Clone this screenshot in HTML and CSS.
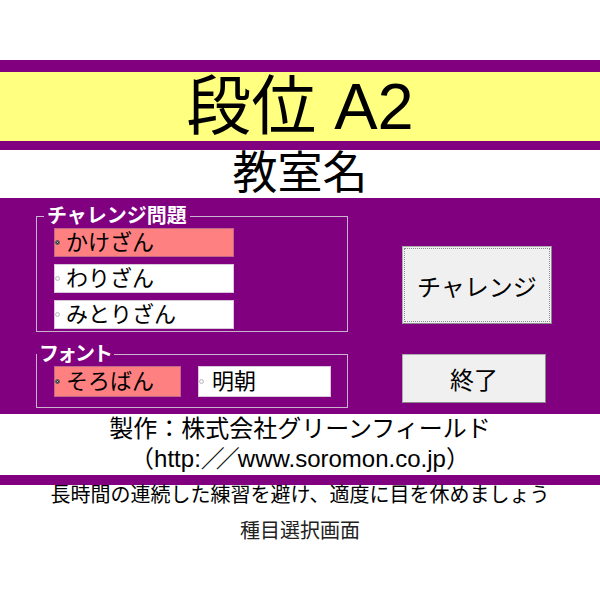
FILE: index.html
```html
<!DOCTYPE html>
<html lang="ja">
<head>
<meta charset="utf-8">
<title>種目選択画面</title>
<link rel="stylesheet" href="styles.css">
</head>
<body>
<div class="page">
  <div class="top-gap"></div>
  <header class="title-band">
    <h1 class="title">段位 A2</h1>
  </header>
  <div class="school">教室名</div>
  <main class="panel">
    <div class="left">
      <fieldset class="group group-problem">
        <legend class="legend legend-problem">チャレンジ問題</legend>
        <div class="options">
          <div class="opt opt-on opt-wide"><span class="radio radio-on"></span><span class="opt-text">かけざん</span></div>
          <div class="opt opt-wide"><span class="radio"></span><span class="opt-text">わりざん</span></div>
          <div class="opt opt-wide"><span class="radio"></span><span class="opt-text">みとりざん</span></div>
        </div>
      </fieldset>
      <fieldset class="group group-font">
        <legend class="legend legend-font">フォント</legend>
        <div class="font-options">
          <div class="opt opt-on opt-font opt-soroban"><span class="radio radio-on"></span><span class="opt-text">そろばん</span></div>
          <div class="opt opt-font opt-mincho"><span class="radio"></span><span class="opt-text">明朝</span></div>
        </div>
      </fieldset>
    </div>
    <div class="right">
      <button class="btn btn-challenge" type="button">チャレンジ</button>
      <button class="btn btn-exit" type="button">終了</button>
    </div>
  </main>
  <div class="credit">
    <div class="credit-line">製作：株式会社グリーンフィールド</div>
    <div class="credit-line">（http:<span class="slashes">／／</span>www.soromon.co.jp）</div>
  </div>
  <div class="bar"></div>
  <p class="note">長時間の連続した練習を避け、適度に目を休めましょう</p>
  <p class="screen-name">種目選択画面</p>
</div>
</body>
</html>
```

FILE: styles.css
```css
* { box-sizing: border-box; }

html, body {
  margin: 0;
  padding: 0;
  background: #ffffff;
}

body {
  font-family: "Liberation Sans", "Noto Sans CJK JP", sans-serif;
  color: #000000;
}

.page {
  width: 600px;
  height: 600px;
  overflow: hidden;
}

.top-gap {
  height: 60px;
}

.title-band {
  background: #ffff80;
  border-top: 12px solid #800080;
  border-bottom: 9px solid #800080;
  height: 90px;
}

.title {
  margin: 0;
  font-weight: normal;
  font-size: 65px;
  line-height: 69px;
  text-align: center;
}

.school {
  height: 48px;
  font-size: 45px;
  line-height: 48px;
  text-align: center;
}

.panel {
  background: #800080;
  height: 216px;
  display: flex;
}

.left {
  padding-left: 36px;
  width: 348px;
}

.group {
  margin: 0;
  padding: 2px 0 2px 0;
  min-width: 0;
  width: 312px;
  border: 1px solid #c8b4cc;
}

.group-problem {
  margin-top: 8px;
}

.group-font {
  margin-top: 12px;
  padding-bottom: 10px;
}

.legend {
  color: #ffffff;
  font-weight: bold;
  font-size: 20px;
  line-height: 20px;
  padding: 0 3px;
}

.legend-problem {
  margin-left: 7px;
}

.legend-font {
  margin-left: 0;
  padding-left: 2px;
  letter-spacing: -2px;
}

.options {
  display: flex;
  flex-direction: column;
  gap: 7px;
  margin-left: 17px;
}

.font-options {
  display: flex;
  gap: 17px;
  margin-left: 17px;
}

.opt {
  display: flex;
  align-items: center;
  background: #ffffff;
  border: 1px solid #d9c8dc;
  height: 29px;
  font-size: 22px;
}

.opt-on {
  background: #ff8080;
  border-color: #c06a8a;
}

.opt-wide {
  width: 180px;
}

.opt-font {
  height: 31px;
}

.opt-soroban {
  width: 127px;
}

.opt-mincho {
  width: 133px;
}

.radio {
  width: 5px;
  height: 5px;
  border-radius: 50%;
  border: 1px solid #bbbbbb;
  background: #f4f4f4;
  margin-left: 0;
  margin-right: 6px;
  flex: none;
}

.radio-on {
  border-color: #444444;
  background: #ffffff;
  box-shadow: inset 0 0 0 1px #222222;
}

.opt-mincho .radio {
  margin-right: 8px;
}

.opt-text {
  line-height: 1;
}

.right {
  display: flex;
  flex-direction: column;
  align-items: flex-start;
  margin-left: 54px;
  padding-top: 48px;
}

.btn {
  font-family: "Liberation Sans", "Noto Sans CJK JP", sans-serif;
  font-size: 24px;
  color: #000000;
  background: #f0f0f0;
  border: 1px solid #adadad;
  border-right-color: #8a8a8a;
  border-bottom-color: #8a8a8a;
  padding: 0;
  margin: 0;
}

.btn-challenge {
  width: 150px;
  height: 78px;
  outline: 1px dotted #8c8c8c;
  outline-offset: -3px;
}

.btn-exit {
  width: 144px;
  height: 49px;
  margin-top: 30px;
}

.credit {
  height: 61px;
  text-align: center;
  font-size: 24px;
  line-height: 30px;
}

.slashes {
  letter-spacing: -9px;
  padding-right: 7px;
}

.bar {
  height: 10px;
  background: #800080;
}

.note {
  margin: 0;
  text-align: center;
  font-size: 20px;
  line-height: 20px;
}

.screen-name {
  margin: 16px 0 0 0;
  text-align: center;
  font-size: 20px;
  line-height: 20px;
  color: #222222;
}
```
